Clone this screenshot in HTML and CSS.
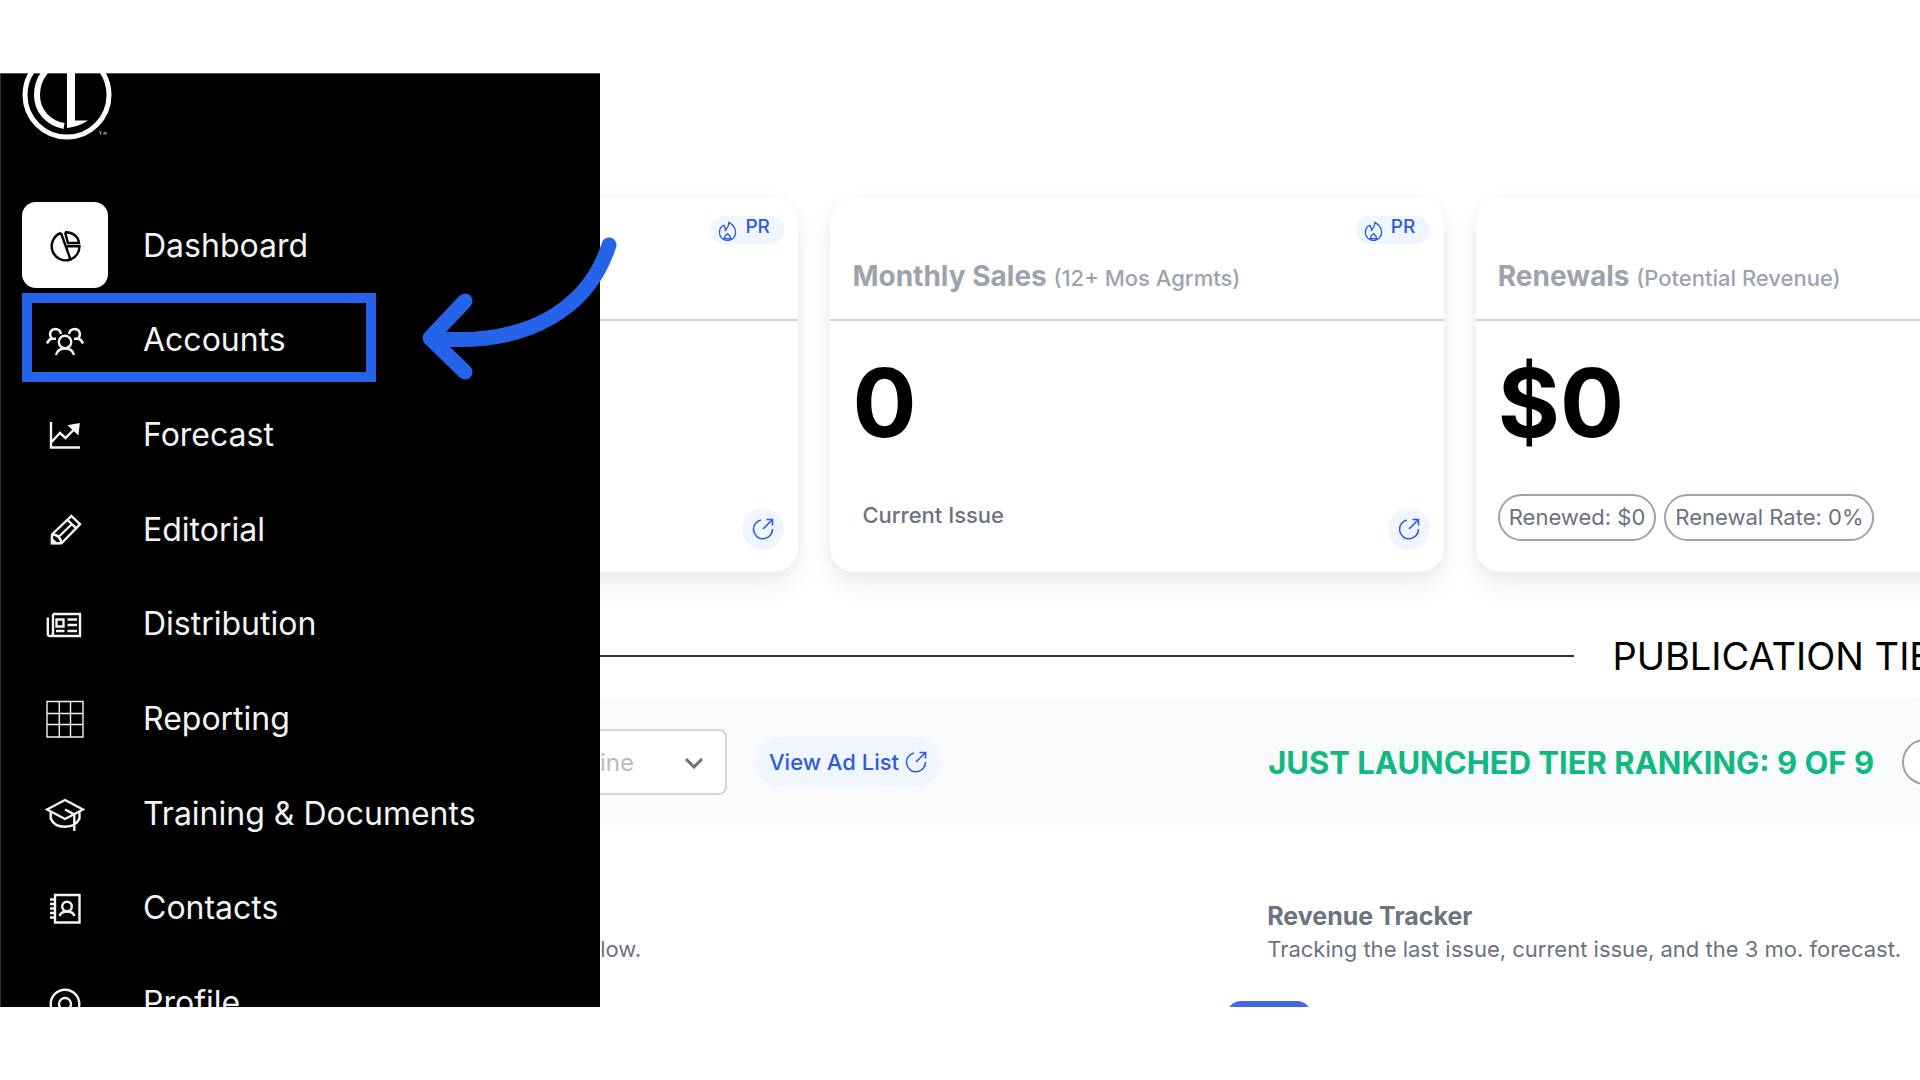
FILE: index.html
```html
<!DOCTYPE html>
<html lang="en">
<head>
  <meta charset="UTF-8">
  <title>Dashboard</title>
  <meta name="viewport" content="width=device-width, initial-scale=1">
  <link rel="stylesheet" href="styles.css">
</head>
<body>
  <!-- shared icons -->
  <svg class="sprite" aria-hidden="true">
    <symbol id="icon-fire" viewBox="0 0 20 20">
      <path d="M6.500 3.800C6.500 6 7.500 7.500 8.500 8.500C10 6.500 11.500 4 11.500 1C15 3 18.500 7 18.500 11.500A8.500 8.500 0 0 1 1.500 11.500C1.500 8.500 3.500 5 6.500 3.800M8.500 8.500L7 10M7.200 19V15.500L10 12.800L12.800 15.500V19M5 18H15"/>
    </symbol>
    <symbol id="icon-open" viewBox="0 0 22 22">
      <path d="M9 2A9.500 9.500 0 1 0 20.500 11M11 11L20.500 1.500M14.500 1.500H20.500V7.500"/>
    </symbol>
  </svg>

  <div class="frame">
    <aside class="sidebar">
      <a class="logo" href="#" aria-label="Home">
        <svg viewBox="0 0 92 92">
          <circle cx="46" cy="46" r="42" fill="none" stroke="#fff" stroke-width="5"/>
          <path d="M42 13C27 15 16 29 16 46C16 62 27 74 43 77" fill="none" stroke="#fff" stroke-width="6"/>
          <path d="M46 0H54V71.500H67C61 75.500 54 78 46 79Z" fill="#fff" stroke="none"/>
          <path d="M78 83H81M79.500 83V86M83 86V83L84 85L85 83V86" fill="none" stroke="#888" stroke-width="1"/>
        </svg>
      </a>
      <nav class="nav">
        <a class="nav-item active" href="#">
          <span class="nav-icon"><svg viewBox="0 0 40 40"><path d="M16 8A14 14 0 1 0 25.500 34.500L16 8M20 7.300L23 18H34C33.500 12 28 7 20 7.300M22 21.300H34.500C34.500 27 31 32 26.500 34"/></svg></span>
          Dashboard
        </a>
        <a class="nav-item outlined" href="#">
          <span class="nav-icon"><svg viewBox="0 0 40 40"><circle cx="20" cy="22" r="6.200"/><path d="M11 35C12 31 15 28.500 20 28.500S28 31 29 35M16 14C15.500 10.500 13 9 10 9C5 9.500 3.500 15 7 18.500C4 19.500 3 21 2 23.500M6.500 18.700H11M24 14C24.500 10.500 27 9 30 9C35 9.500 36.500 15 33 18.500C36 19.500 37 21 38 23.500M33.500 18.700H29"/></svg></span>
          Accounts
        </a>
        <a class="nav-item" href="#">
          <span class="nav-icon"><svg viewBox="0 0 40 40"><path d="M6 7V32.500H35M6.500 27L15 18L20.500 23L32 11.500"/><path class="solid" d="M25 11L33.500 9.500L32.500 18Z"/></svg></span>
          Forecast
        </a>
        <a class="nav-item" href="#">
          <span class="nav-icon"><svg viewBox="0 0 40 40"><path d="M26.500 7L35 15.300L16.500 34.300H7V25.500ZM22.500 11L31 19.200M7 25.500C12 25.500 15.500 29 16.500 34M13.500 28L27 15"/><path class="solid" d="M7 30.500L11 34H7Z"/></svg></span>
          Editorial
        </a>
        <a class="nav-item" href="#">
          <span class="nav-icon"><svg viewBox="0 0 40 40"><path d="M8 10H35V32H5C3.500 32 2.800 31 2.800 30V13.500M8 10V30C8 31 7 32 5.500 32M11.500 15.500H18.500V22.500H11.500ZM22.500 15.500H32M22.500 21H32M22.500 27H32M11 27H19.500"/></svg></span>
          Distribution
        </a>
        <a class="nav-item" href="#">
          <span class="nav-icon"><svg viewBox="0 0 40 40"><path class="thin" d="M2 2.500H38V38H2ZM14.300 2.500V38M25.500 2.500V38M2 14.500H38M2 25.500H38"/></svg></span>
          Reporting
        </a>
        <a class="nav-item" href="#">
          <span class="nav-icon"><svg viewBox="0 0 40 40"><path d="M20 7L38 16.500L20 26L2 16.500ZM20 16.500L29.300 21.500V38M5.700 19V25.500C8 31 13 33.700 20 33.700S32 31 34.500 25.500V19"/></svg></span>
          Training &amp; Documents
        </a>
        <a class="nav-item" href="#">
          <span class="nav-icon"><svg viewBox="0 0 40 40"><path d="M10 7H34.500V34.500H10ZM5 11.500H10M5 16H10M5 20.500H10M5 25H10M5 29.500H10M14.500 28C15.500 25 18 23.500 22 23.500S28.500 25 29.500 28"/><circle cx="22" cy="18.500" r="4.800"/></svg></span>
          Contacts
        </a>
        <a class="nav-item" href="#">
          <span class="nav-icon"><svg viewBox="0 0 40 40"><circle cx="20" cy="21" r="14.300"/><circle cx="20" cy="21" r="6"/></svg></span>
          Profile
        </a>
      </nav>
      <div class="highlight"></div>
      <svg class="pointer" viewBox="0 0 210 160" aria-hidden="true">
        <path d="M193 14C173 76 113 117 14 107M49 70L14 107L49 141"/>
      </svg>
    </aside>

    <main class="content">
      <section class="cards">
        <article class="card">
          <header class="card-head">
            <span class="badge"><svg><use href="#icon-fire"/></svg>PR</span>
          </header>
          <div class="card-foot">
            <button class="open-btn" aria-label="Open report"><svg><use href="#icon-open"/></svg></button>
          </div>
        </article>
        <article class="card">
          <header class="card-head">
            <span class="badge"><svg><use href="#icon-fire"/></svg>PR</span>
            <h2>Monthly Sales <small>(12+ Mos Agrmts)</small></h2>
          </header>
          <p class="value">0</p>
          <div class="card-foot">
            <span class="label">Current Issue</span>
            <button class="open-btn" aria-label="Open monthly sales"><svg><use href="#icon-open"/></svg></button>
          </div>
        </article>
        <article class="card">
          <header class="card-head">
            <h2>Renewals <small>(Potential Revenue)</small></h2>
          </header>
          <p class="value">$0</p>
          <div class="card-foot">
            <span class="pill">Renewed: $0</span>
            <span class="pill">Renewal Rate: 0%</span>
          </div>
        </article>
      </section>

      <h1 class="divider">PUBLICATION TIER</h1>

      <section class="toolbar">
        <div class="filters">
          <div class="select-wrap">
            <select aria-label="Magazine"><option>Magazine</option></select>
            <svg viewBox="0 0 20 12"><path d="M2 2L10 10L18 2"/></svg>
          </div>
          <a class="ad-list" href="#">View Ad List <svg><use href="#icon-open"/></svg></a>
        </div>
        <div class="ranking">
          <h2>JUST LAUNCHED TIER RANKING: 9 OF 9</h2>
          <button class="rank-btn" aria-label="Ranking details"></button>
        </div>
      </section>

      <section class="trackers">
        <p class="note">below.</p>
        <div>
          <h3>Revenue Tracker</h3>
          <p>Tracking the last issue, current issue, and the 3 mo. forecast.</p>
        </div>
      </section>
      <button class="tracker-btn" aria-label="Show forecast"></button>
    </main>
  </div>
</body>
</html>
```

FILE: styles.css
```css
:root { --blue: #2563eb; --link: #3059e0; --pale: #eff6ff; --gray: #6b7280; --line: #d1d5db; }
* { box-sizing: border-box; margin: 0; padding: 0; }
body { font-family: Inter, sans-serif; background: #fff; color: #000; padding: 73px 0; overflow: hidden; }
a { color: inherit; text-decoration: none; }
svg { display: block; fill: none; stroke: currentColor; }
button { font: inherit; cursor: pointer; }
.sprite { display: none; }
.frame { position: relative; height: calc(100vh - 146px); overflow: hidden; }

/* sidebar lies over the page content */
.sidebar { position: absolute; top: 0; left: 0; z-index: 5; width: 600px; height: 100%; background: #000; border-left: 1px solid #333; border-top: 1px solid #555; color: #f3f4f6; }
.logo { display: block; width: 92px; margin: -25px 0 0 20px; }
.nav { display: grid; grid-auto-rows: 1fr; height: 852px; margin-top: 57px; padding-left: 21px; }
.nav-item { display: flex; align-items: center; gap: 35px; font-size: 32px; white-space: nowrap; }
.nav-icon { display: grid; place-items: center; width: 86px; height: 86px; border-radius: 14px; }
.nav-icon svg { width: 40px; height: 40px; stroke-width: 2.4; }
.nav-icon .thin { stroke-width: 1.4; }
.nav-icon .solid { fill: currentColor; }
.active .nav-icon { background: #fff; color: #000; }
.highlight { position: absolute; top: 219px; left: 21px; width: 354px; height: 89px; border: 10px solid var(--blue); }
.pointer { position: absolute; top: 157px; left: 415px; width: 210px; height: 160px; stroke: var(--blue); stroke-width: 15; stroke-linecap: round; stroke-linejoin: round; }

.content { padding-top: 125px; }
.cards { display: grid; grid-template-columns: repeat(3, calc(32vw - 1px)); gap: 32px; padding-left: 185px; }
.card { display: flex; flex-direction: column; height: 374px; border-radius: 24px; background: #fff; box-shadow: 0 14px 24px rgba(0,0,0,.07), 0 0 14px rgba(0,0,0,.04); }
.card-head { display: flex; flex-direction: column; height: 123px; padding: 18px 14px 24px 22px; border-bottom: 2px solid var(--line); }
.card-head h2 { margin-top: auto; font-size: 28px; line-height: 34px; font-weight: 700; color: #9ca3af; }
.card-head small { font-size: 22px; font-weight: 500; }
.badge { display: flex; align-self: flex-end; gap: 8px; width: 74px; height: 28px; padding-left: 8px; border-radius: 14px; background: var(--pale); color: var(--link); font-size: 19px; line-height: 22px; font-weight: 500; }
.badge svg { flex: none; width: 19px; height: 20px; margin-top: 5px; stroke-width: 1.4; }
.value { margin-top: 34px; padding-left: 22px; font-size: 95px; line-height: 96px; font-weight: 700; }
.card-foot { display: flex; gap: 8px; height: 78px; margin-top: auto; padding: 0 14px 22px 22px; font-size: 22px; color: var(--gray); }
.label { padding-left: 10px; line-height: 42px; font-weight: 500; }
.pill { height: 47px; padding: 0 9px; border: 2px solid #9ca3af; border-radius: 24px; line-height: 43px; }
.open-btn { display: grid; place-items: center; align-self: flex-end; width: 42px; height: 42px; margin-left: auto; border: 0; border-radius: 50%; background: var(--pale); color: var(--link); }
.open-btn svg, .ad-list svg { width: 22px; height: 22px; stroke-width: 1.6; }

.divider { display: flex; align-items: center; gap: 38px; height: 46px; margin-top: 61px; font-size: 38px; font-weight: 400; white-space: nowrap; }
.divider::before { content: ""; flex: 0 0 82vw; height: 2px; background: #333; }

.toolbar { display: grid; grid-template-columns: 66vw 1fr; align-items: center; height: 127px; margin-top: 19px; padding-top: 1px; background: #f8fafc; box-shadow: 0 -2px 3px rgba(0,0,0,.02); }
.filters { display: flex; align-items: center; gap: 28px; padding-left: 300px; }
.select-wrap { position: relative; width: 427px; }
.select-wrap select { width: 100%; height: 66px; padding-right: 91px; border: 2px solid var(--line); border-radius: 8px; background: #fff; color: #bbb; font: 24px Inter, sans-serif; text-align-last: right; appearance: none; }
.select-wrap svg { position: absolute; right: 23px; top: 28px; width: 20px; height: 12px; color: var(--gray); stroke-width: 3; }
.ad-list { display: flex; align-items: center; gap: 6px; height: 50px; padding: 0 14px; border-radius: 25px; background: var(--pale); color: var(--link); font-size: 22px; font-weight: 500; white-space: nowrap; }
.ranking { display: flex; align-items: center; gap: 28px; padding-left: 1px; white-space: nowrap; }
.ranking h2 { font-size: 31px; font-weight: 700; color: #10b981; }
.rank-btn { flex: 0 0 160px; height: 46px; border: 2px solid #9ca3af; border-radius: 23px; background: #fff; }

.trackers { display: grid; grid-template-columns: 66vw 1fr; margin-top: 75px; color: var(--gray); font-size: 22px; line-height: 33px; white-space: nowrap; }
.trackers h3 { font-size: 25px; font-weight: 700; }
.note { align-self: end; width: 641px; text-align: right; }
.tracker-btn { display: block; width: 84px; height: 48px; margin: 35px 0 0 1227px; border: 0; border-radius: 14px; background: #4169e1; }
```
